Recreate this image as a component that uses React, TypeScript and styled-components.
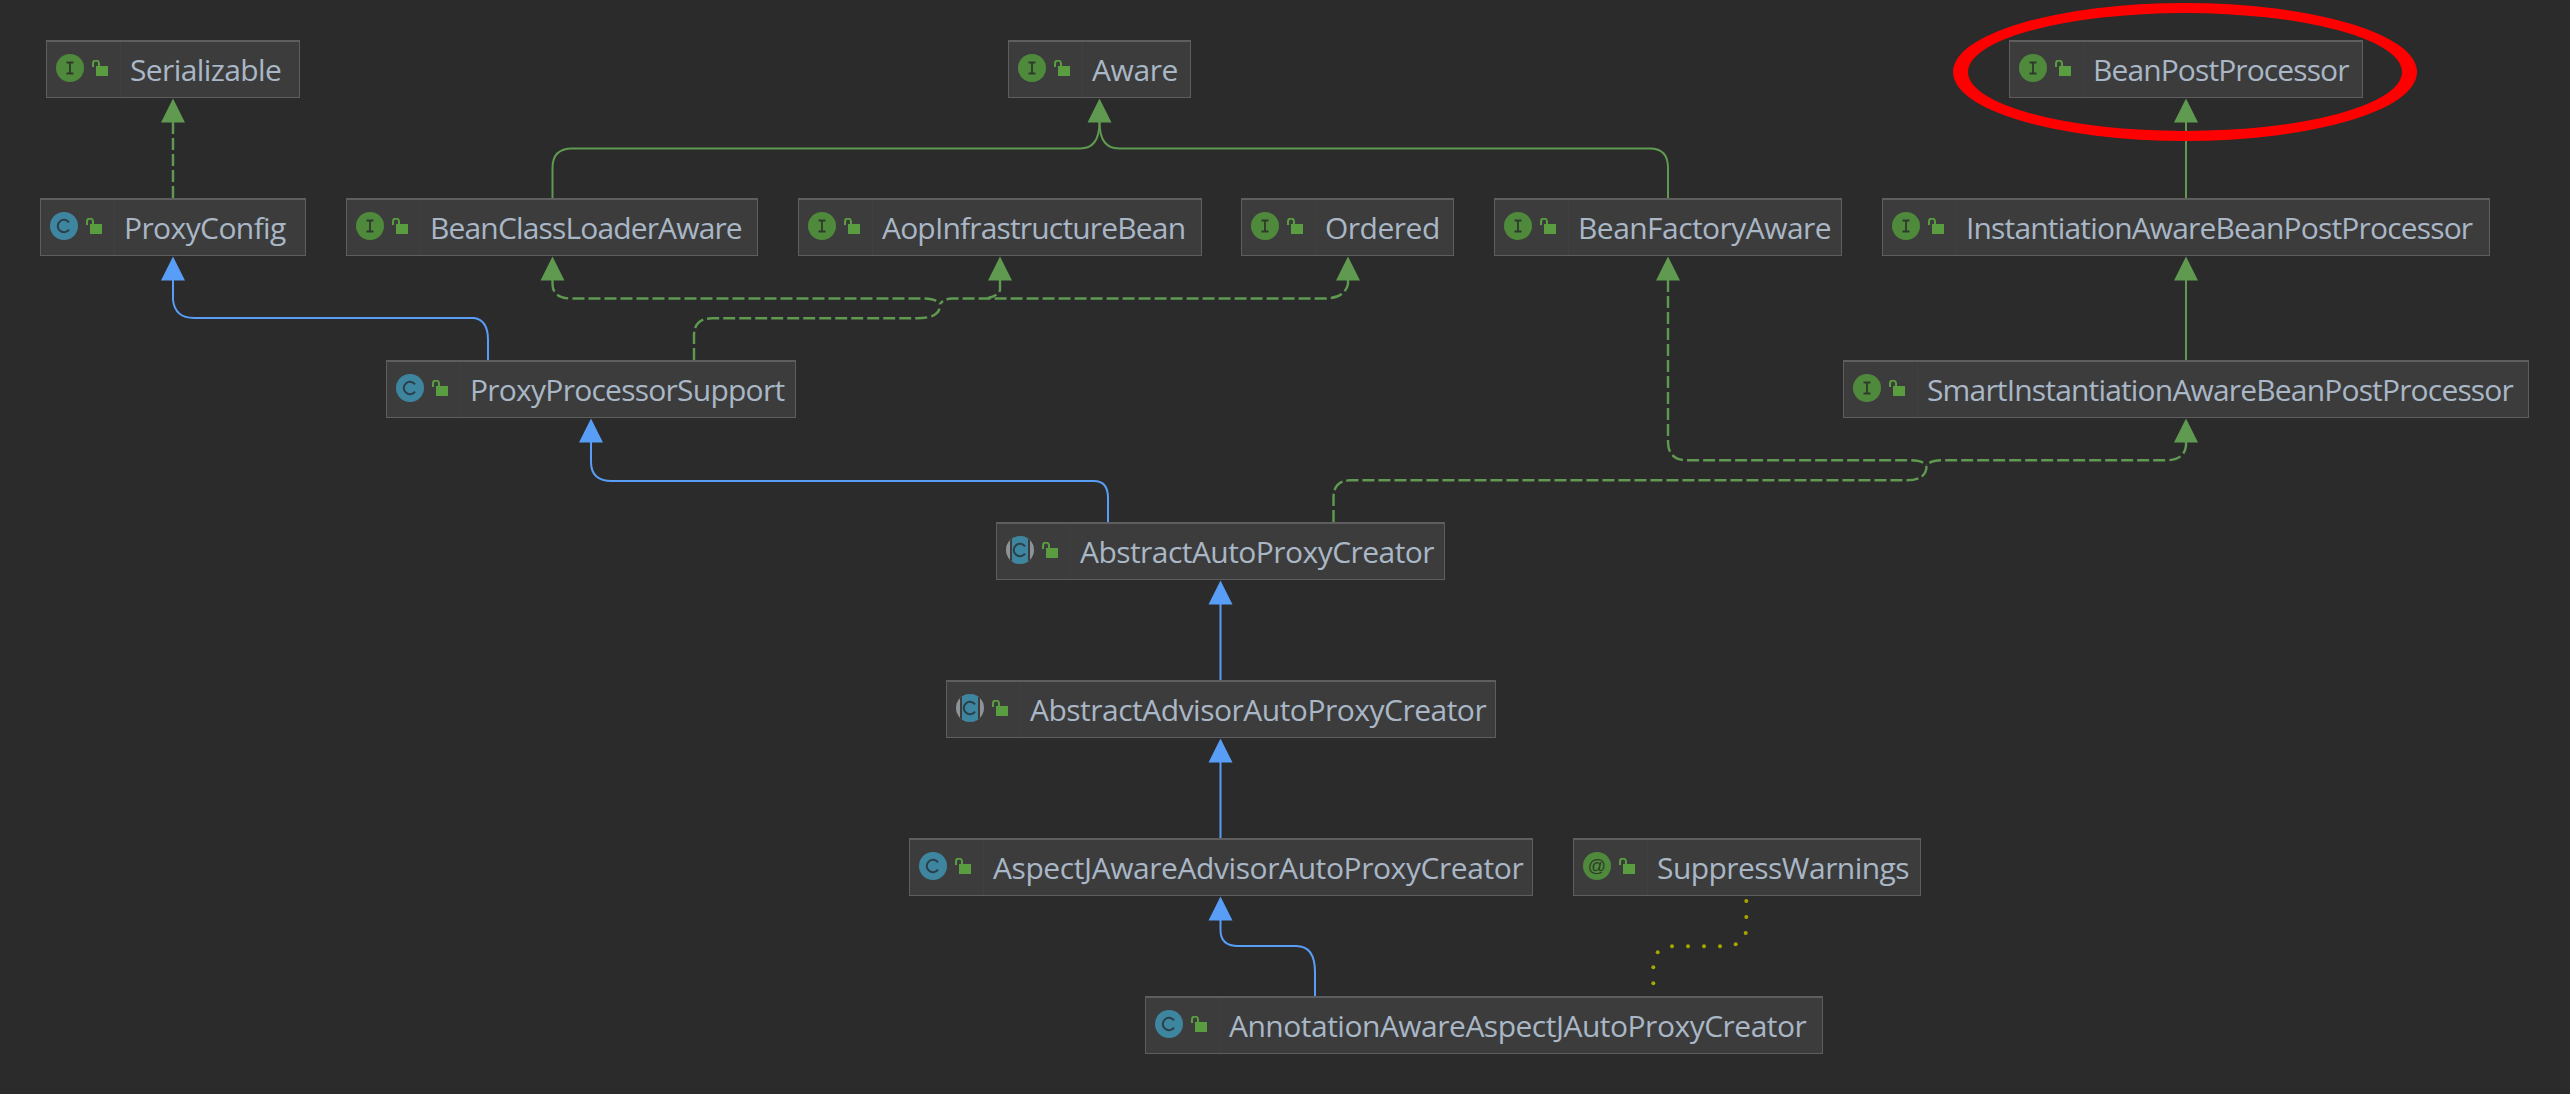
import React from 'react';
import styled, {createGlobalStyle} from 'styled-components';

type Kind = 'interface' | 'class' | 'abstract' | 'annotation'

interface NodeData {
    name: string,
    kind: Kind,
    x: number,
    y: number,
    w: number,
    tracking?: number
}

const GREEN = '#5f9a50'
const BLUE = '#589df6'

const nodes: NodeData[] = [
    {name: 'Serializable', kind: 'interface', x: 46, y: 40, w: 254, tracking: -0.6},
    {name: 'Aware', kind: 'interface', x: 1008, y: 40, w: 183, tracking: -0.4},
    {name: 'BeanPostProcessor', kind: 'interface', x: 2009, y: 40, w: 354, tracking: -0.9},
    {name: 'ProxyConfig', kind: 'class', x: 40, y: 198, w: 266, tracking: -0.6},
    {name: 'BeanClassLoaderAware', kind: 'interface', x: 346, y: 198, w: 412, tracking: -0.85},
    {name: 'AopInfrastructureBean', kind: 'interface', x: 798, y: 198, w: 404, tracking: -0.83},
    {name: 'Ordered', kind: 'interface', x: 1241, y: 198, w: 213, tracking: -0.5},
    {name: 'BeanFactoryAware', kind: 'interface', x: 1494, y: 198, w: 348, tracking: -0.55},
    {name: 'InstantiationAwareBeanPostProcessor', kind: 'interface', x: 1882, y: 198, w: 608, tracking: -0.83},
    {name: 'ProxyProcessorSupport', kind: 'class', x: 386, y: 360, w: 410, tracking: -0.75},
    {name: 'SmartInstantiationAwareBeanPostProcessor', kind: 'interface', x: 1843, y: 360, w: 686, tracking: -0.83},
    {name: 'AbstractAutoProxyCreator', kind: 'abstract', x: 996, y: 522, w: 449, tracking: -0.55},
    {name: 'AbstractAdvisorAutoProxyCreator', kind: 'abstract', x: 946, y: 680, w: 550, tracking: -0.5},
    {name: 'AspectJAwareAdvisorAutoProxyCreator', kind: 'class', x: 909, y: 838, w: 624, tracking: -0.42},
    {name: 'SuppressWarnings', kind: 'annotation', x: 1573, y: 838, w: 348, tracking: -0.55},
    {name: 'AnnotationAwareAspectJAutoProxyCreator', kind: 'class', x: 1145, y: 996, w: 678, tracking: -0.5},
]

const solidGreen = [
    'M552.5 198 V168 Q552.5 148.5 572 148.5 H1080 Q1099.5 148.5 1099.5 122',
    'M1668 198 V168 Q1668 148.5 1650 148.5 H1119 Q1099.5 148.5 1099.5 122',
    'M2186 198 V122',
    'M2186 360 V280',
]

const dashedGreen = [
    'M173 198 V122',
    'M552.5 280 V284 Q552.5 298.5 572 298.5 H923 Q936 298.5 940 304',
    'M694 360 V336 Q694 318.3 712 318.3 H917 Q940 318.3 940 305',
    'M1348 280 V284 Q1345 298.5 1324 298.5 H952 Q944 298.5 940 304',
    'M1000 280 V290 Q998 296 988 298',
    'M1668 280 V442 Q1668 460.3 1688 460.3 H1910 Q1922 460.3 1926.5 465',
    'M1333.5 522 V498 Q1333.5 480.3 1350 480.3 H1906 Q1926.5 480.3 1926.5 466',
    'M2186 442 V446 Q2184 460.3 2166 460.3 H1942 Q1931 460.3 1926.5 465',
]

const solidBlue = [
    'M173 280 V300 Q175 318 194 318 H474 Q488 320 488 340 V360',
    'M591 442 V462 Q591 481 612 481 H1094 Q1108 481 1108 498 V522',
    'M1220.5 604 V680',
    'M1220.5 762 V838',
    'M1220.5 920 V930 Q1220.5 946 1238 946 H1296 Q1315 946 1315 972 V996',
]

const arrows: { x: number, y: number, color: string }[] = [
    {x: 173, y: 98.5, color: GREEN},
    {x: 1099.5, y: 98.5, color: GREEN},
    {x: 2186, y: 98.5, color: GREEN},
    {x: 552.5, y: 256.5, color: GREEN},
    {x: 1000, y: 256.5, color: GREEN},
    {x: 1348, y: 256.5, color: GREEN},
    {x: 1668, y: 256.5, color: GREEN},
    {x: 2186, y: 256.5, color: GREEN},
    {x: 2186, y: 418.5, color: GREEN},
    {x: 173, y: 256.5, color: BLUE},
    {x: 591, y: 418.5, color: BLUE},
    {x: 1220.5, y: 580.5, color: BLUE},
    {x: 1220.5, y: 738.5, color: BLUE},
    {x: 1220.5, y: 896.5, color: BLUE},
]

const dots: [number, number][] = [
    [1746.3, 901], [1746.3, 917], [1745.7, 933], [1735.7, 944.3], [1720, 946.3], [1704, 946.3],
    [1688, 946.3], [1672, 946.3], [1657.7, 952.3], [1653.3, 967.3], [1653.3, 983.3],
]

const GlobalStyle = createGlobalStyle`
  html, body {
    margin: 0;
    padding: 0;
    background: #2b2b2b;
  }
`

const Canvas = styled.div`
  position: relative;
  width: 2570px;
  height: 1094px;
  overflow: hidden;
  background: #2b2b2b;
  font-family: "Open Sans", "Noto Sans", sans-serif;
`

const Edges = styled.svg`
  position: absolute;
  inset: 0;
`

const Node = styled.div`
  position: absolute;
  box-sizing: border-box;
  height: 58px;
  display: flex;
  align-items: stretch;
  background: #3c3c3c;
  border: solid #5e5e5e;
  border-width: 2px 1px 1px 1px;
`

const IconCell = styled.div`
  flex: 0 0 74px;
  box-sizing: border-box;
  display: flex;
  gap: 8px;
  padding: 12px 0 0 9px;
  border-right: 1px solid #404040;
`

const Label = styled.span<{ $tracking?: number }>`
  padding-left: 9px;
  font-size: 30px;
  line-height: 56px;
  letter-spacing: ${({$tracking}) => $tracking ?? -0.5}px;
  color: #a9b7c6;
  white-space: nowrap;
`

const Badge = styled.svg`
  flex: none;
  width: 28px;
  height: 28px;
`

const Lock = styled.svg`
  flex: none;
  width: 16px;
  height: 16px;
  margin-top: 6px;
`

function KindIcon({kind}: { kind: Kind }) {
    if (kind === 'interface' || kind === 'annotation') {
        return (
            <Badge viewBox="0 0 28 28">
                <circle cx="14" cy="14" r="14" fill="#4f8a3c"/>
                {kind === 'interface'
                    ? <path d="M10.5 8.5h7M10.5 19.5h7M14 8.5v11" stroke="#2e3a2b" strokeWidth="1.8" fill="none"/>
                    : <text x="14" y="20" textAnchor="middle" fontSize="18" fontFamily="Liberation Sans, sans-serif" fill="#2e3a2b">@</text>}
            </Badge>
        )
    }
    return (
        <Badge viewBox="0 0 28 28">
            {kind === 'abstract' ? (
                <>
                    <clipPath id="abstract-badge">
                        <circle cx="14" cy="14" r="14"/>
                    </clipPath>
                    <g clipPath="url(#abstract-badge)">
                        <rect width="28" height="28" fill="#8d9396"/>
                        <rect x="4" width="20" height="28" fill="#3c3c3c"/>
                        <rect x="6" width="16" height="28" fill="#3e86a0"/>
                    </g>
                </>
            ) : <circle cx="14" cy="14" r="14" fill="#3e86a0"/>}
            <path d="M19 10.4a6.2 6.2 0 1 0 0 7.2" stroke="#2b3f49" strokeWidth="2" fill="none"/>
        </Badge>
    )
}

function LockIcon() {
    return (
        <Lock viewBox="0 0 16 16">
            <rect x="4" y="6" width="12" height="10" fill="#5a9c40"/>
            <path d="M1 7V3.5a3 3 0 0 1 6 0V6" stroke="#5a9c40" strokeWidth="2" fill="none"/>
        </Lock>
    )
}

function App() {
    return (
        <Canvas>
            <GlobalStyle/>
            {nodes.map(node => (
                <Node key={node.name} style={{left: node.x, top: node.y, width: node.w}}>
                    <IconCell>
                        <KindIcon kind={node.kind}/>
                        <LockIcon/>
                    </IconCell>
                    <Label $tracking={node.tracking}>{node.name}</Label>
                </Node>
            ))}
            <Edges width="2570" height="1094" viewBox="0 0 2570 1094" fill="none">
                {solidGreen.map(d => <path key={d} d={d} stroke={GREEN} strokeWidth="2"/>)}
                {dashedGreen.map(d => <path key={d} d={d} stroke={GREEN} strokeWidth="2.4" strokeDasharray="12 4"/>)}
                {solidBlue.map(d => <path key={d} d={d} stroke={BLUE} strokeWidth="2"/>)}
                {arrows.map(a => (
                    <polygon key={`${a.x}-${a.y}`} points={`${a.x},${a.y} ${a.x + 12},${a.y + 24} ${a.x - 12},${a.y + 24}`} fill={a.color}/>
                ))}
                {dots.map(([x, y]) => <circle key={`${x}-${y}`} cx={x} cy={y} r="2" fill="#a6a600"/>)}
                <path
                    fillRule="evenodd"
                    fill="#ff0000"
                    d="M1953 72a232 69 0 1 0 464 0a232 69 0 1 0 -464 0ZM1968 72a217 59 0 1 0 434 0a217 59 0 1 0 -434 0Z"
                />
            </Edges>
        </Canvas>
    )
}

export default App;
